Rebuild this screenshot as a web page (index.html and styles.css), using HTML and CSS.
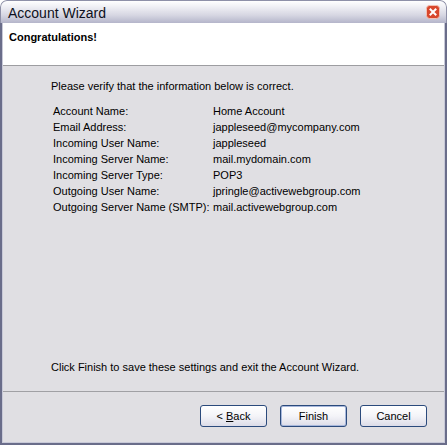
FILE: index.html
```html
<!DOCTYPE html>
<html>
<head>
<meta charset="utf-8">
<link rel="stylesheet" href="styles.css">
</head>
<body>
<div class="window">
  <div class="titlebar">
    <span class="title">Account Wizard</span>
    <div class="close"><svg class="close-x" width="14" height="14" viewBox="0 0 14 14"><rect x="0.5" y="0.5" width="13" height="13" rx="3" fill="#d8472c" stroke="#f3c0b2"/><path d="M4.5 4.5 L9.5 9.5 M9.5 4.5 L4.5 9.5" stroke="#ffffff" stroke-width="2" stroke-linecap="square"/></svg></div>
  </div>
  <div class="frame">
    <div class="header">Congratulations!</div>
    <div class="content">
      <p class="intro">Please verify that the information below is correct.</p>
      <div class="grid">
        <span>Account Name:</span><span>Home Account</span>
        <span>Email Address:</span><span>jappleseed@mycompany.com</span>
        <span>Incoming User Name:</span><span>jappleseed</span>
        <span>Incoming Server Name:</span><span>mail.mydomain.com</span>
        <span>Incoming Server Type:</span><span>POP3</span>
        <span>Outgoing User Name:</span><span>jpringle@activewebgroup.com</span>
        <span>Outgoing Server Name (SMTP):</span><span>mail.activewebgroup.com</span>
      </div>
      <p class="finish-note">Click Finish to save these settings and exit the Account Wizard.</p>
    </div>
    <div class="footer">
      <button class="btn">&lt; <u>B</u>ack</button>
      <button class="btn default">Finish</button>
      <button class="btn">Cancel</button>
    </div>
  </div>
</div>
</body>
</html>
```

FILE: styles.css
```css
html, body {
  margin: 0;
  padding: 0;
  background: #ffffff;
}
.window {
  width: 447px;
  height: 445px;
  box-sizing: border-box;
  display: flex;
  flex-direction: column;
  font-family: "Liberation Sans", Arial, sans-serif;
  font-size: 11px;
  color: #000;
  background: #e0dfe3;
  border-radius: 7px 7px 0 0;
  overflow: hidden;
}
.titlebar {
  height: 23px;
  flex: none;
  box-sizing: border-box;
  display: flex;
  align-items: center;
  justify-content: space-between;
  padding: 0 7px 0 7px;
  background: linear-gradient(to bottom, #ffffff 0%, #f0f0f5 25%, #d6d6e2 65%, #b4b5ca 100%);
  border: 1px solid #8e90a8;
  border-bottom: none;
  border-radius: 7px 7px 0 0;
}
.title {
  font-size: 14px;
  color: #0e1020;
  padding-top: 1px;
}
.close {
  width: 14px;
  height: 14px;
  margin-right: -1px;
  line-height: 0;
}
.close-x {
  display: block;
}
.frame {
  flex: 1;
  display: flex;
  flex-direction: column;
  border-left: 2px solid #6a6d8a;
  border-right: 2px solid #6a6d8a;
  border-bottom: 2px solid #6a6d8a;
  box-shadow: inset 1px 0 0 #c8c9d8, inset -1px 0 0 #c8c9d8, inset 0 -1px 0 #c8c9d8;
  padding: 0 1px 1px 1px;
}
.header {
  height: 43px;
  flex: none;
  box-sizing: border-box;
  background: #ffffff;
  border-bottom: 1px solid #9d9da1;
  font-weight: bold;
  padding: 8px 0 0 6px;
}
.content {
  flex: 1;
  display: flex;
  flex-direction: column;
  padding: 14px 0 0 48px;
}
.intro {
  margin: 0 0 10px 0;
  line-height: 13px;
}
.grid {
  display: grid;
  grid-template-columns: 160px auto;
  grid-auto-rows: 16px;
  align-items: center;
  padding-left: 2px;
}
.finish-note {
  margin: auto 0 17px 0;
  line-height: 13px;
}
.footer {
  height: 51px;
  flex: none;
  box-sizing: border-box;
  border-top: 1px solid #a0a0a4;
  display: flex;
  justify-content: flex-end;
  gap: 13px;
  padding: 13px 17px 0 0;
}
.btn {
  width: 67px;
  height: 22px;
  box-sizing: border-box;
  font-family: "Liberation Sans", Arial, sans-serif;
  font-size: 11px;
  color: #000;
  border: 1px solid #2b4a7c;
  border-radius: 3px;
  background: linear-gradient(to bottom, #ffffff 0%, #f4f4f8 50%, #dcdce8 100%);
  padding: 0;
}
.btn.default {
  box-shadow: inset 0 0 0 1px #a8b8dc;
}
```
